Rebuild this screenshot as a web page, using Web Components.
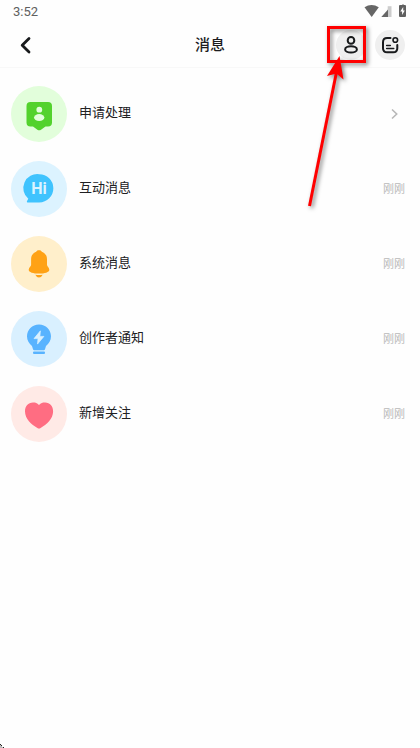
<!DOCTYPE html>
<html lang="zh-CN">
<head>
<meta charset="utf-8">
<meta name="viewport" content="width=device-width, initial-scale=1">
<title>消息</title>
<style>
html,body{margin:0;background:#fefefe}
body{font-family:"Noto Sans","Noto Sans CJK SC",sans-serif;color:#1c1c1e}
</style>
</head>
<body>
<message-page></message-page>

<template id="t-page">
<style>
:host{display:block;position:relative;min-height:100vh;overflow:hidden}
ul{list-style:none;margin:0;padding:8px 0 0}
</style>
<status-bar></status-bar>
<page-header>消息</page-header>
<main><ul>
<li><message-row bg="#e2fedb" more>
<svg slot="icon" viewBox="0 0 56 56"><path fill="#53d22d" d="M19.500 16h17.500q4 0 4 4v16.500q0 4-4 4h-2.500l-4.500 3.200q-1.800 1.300-3.600 0L22 40.500h-2.500q-4 0-4-4V20q0-4 4-4z"/><circle cx="28.300" cy="23.700" r="2.900" fill="#e2fedb"/><ellipse cx="28.200" cy="31.600" rx="5.200" ry="3.500" fill="#e2fedb"/></svg>申请处理</message-row></li>
<li><message-row bg="#dcf3ff" time="刚刚">
<svg slot="icon" viewBox="0 0 56 56"><path fill="#3fc3fe" d="M28.200 13.200a14 14 0 0 1 0 28.300H17.300q-2.300 0-1-2.100l1-1.600A14 14 0 0 1 28.200 13.200z"/><text x="28" y="33" text-anchor="middle" font-family="Roboto, sans-serif" font-size="16" font-weight="700" fill="#dcf3ff">Hi</text></svg>互动消息</message-row></li>
<li><message-row bg="#ffefcb" time="刚刚">
<svg slot="icon" viewBox="0 0 56 56"><path fill="#ffa216" d="M28 14.300c1.300 0 2.200.5 2.800 1.400 3.300 1.200 5.200 4 5.200 7.500v5.500c0 1.500 2.300 3 2.300 5 0 2.500-4.600 3.900-10.300 3.900s-10.300-1.400-10.300-3.900c0-2 2.400-3.500 2.400-5v-5.500c0-3.500 1.800-6.300 5.100-7.500.6-.9 1.500-1.400 2.800-1.400z"/><path fill="#ffa216" d="M24.300 38.800q3.700.6 7.400 0-1.300 2.800-3.700 2.800t-3.700-2.800z"/></svg>系统消息</message-row></li>
<li><message-row bg="#d9f0ff" time="刚刚">
<svg slot="icon" viewBox="0 0 56 56"><path fill="#58b3ff" d="M28 13.500c6.900 0 12 5.200 12 11.800 0 4.100-2.100 7.300-5 9.700l-1 3.200q-.3 1-1.200 1h-9.600q-.9 0-1.200-1l-1-3.200c-2.900-2.400-5-5.600-5-9.700 0-6.600 5.100-11.800 12-11.800z"/><rect x="22" y="40.500" width="12" height="2.400" rx="1" fill="#58b3ff"/><path fill="#d9f0ff" stroke="#d9f0ff" stroke-width=".7" stroke-linejoin="round" d="M29.400 19.800 23 27.600h4l-.5 5.500 6.400-7.700h-4z"/></svg>创作者通知</message-row></li>
<li><message-row bg="#ffeae6" time="刚刚">
<svg slot="icon" viewBox="0 0 56 56"><path fill="#ff6d82" d="M28 19c2-2.200 4.200-2.600 6.100-2.500 4.800.2 8 3.800 8 8.700 0 8-6.500 13-12.500 16.700q-1.600 1-3.200 0C20.400 38.200 14 33.200 14 25.200c0-4.900 3.200-8.500 8-8.700 1.900-.1 4 .3 6 2.500z"/></svg>新增关注</message-row></li>
</ul></main>
<pointer-mark></pointer-mark>
<corner-mark></corner-mark>
</template>

<template id="t-status">
<style>
:host{display:flex;height:22px;align-items:center;justify-content:space-between;padding:0 13px;font:13px Roboto,sans-serif;color:#606060;box-sizing:border-box}
svg{display:block;width:44px;height:22px}
</style>
<time>3:52</time>
<svg viewBox="0 0 44 22" aria-hidden="true"><path fill="#666" d="M1.500 7.300Q8.500 2.700 15.800 7.300L8.700 17z"/><path fill="#ccc" d="M24.700 6.200h3.800V17h-3.800z"/><path fill="#666" d="M18.300 17 25 9.500V17z"/><path fill="#606060" d="M37 5h2.200q0-.8.800-.8t.8.800h1.200q1 0 1 1v10q0 1-1 1h-5q-1 0-1-1V6q0-1 1-1z"/><path fill="#fff" d="M40.200 7 37.300 11.500h1.800V15l2.700-4.600h-1.600z"/></svg>
</template>

<template id="t-header">
<style>
:host{display:grid;grid-template-columns:1fr auto 1fr;align-items:center;height:46px;padding:0 15px 0 11px;border-bottom:1px solid #f8f8f8;box-sizing:border-box}
h1{margin:0;padding:0 0 2px 4px;font-size:15px;line-height:22px;font-weight:500;color:#1c1c1e}
button{appearance:none;border:0;padding:0;margin:0;width:30px;height:30px;border-radius:50%;background:none;color:#181a1c}
svg{display:block;width:30px;height:30px;fill:none;stroke:currentColor;stroke-width:2;stroke-linecap:round;stroke-linejoin:round}
.actions{display:flex;gap:9px;justify-content:flex-end}
.actions button{background:#efefef}
</style>
<button aria-label="返回"><svg viewBox="0 0 30 30"><path stroke-width="2.800" d="M18 8.500 11.200 15.200 18 21.900"/></svg></button>
<h1><slot></slot></h1>
<div class="actions">
<button aria-label="联系人"><svg viewBox="0 0 30 30"><circle cx="15" cy="10.400" r="3.300"/><ellipse cx="15" cy="19.400" rx="5.900" ry="3.100"/></svg></button>
<button aria-label="设置"><svg viewBox="0 0 30 30"><path d="M15.500 8H12.200Q8 8 8 12.200v6Q8 22.300 12.200 22.300h6Q22.300 22.300 22.300 18.200V15"/><circle cx="20.300" cy="10" r="2.300" stroke-width="1.600"/><path stroke-width="1.600" d="M11.700 15.500h3.600M11.700 18.500h7"/></svg></button>
</div>
</template>

<template id="t-row">
<style>
:host{display:flex;align-items:center;height:75px;padding:0 15px 0 11px;gap:12px;box-sizing:border-box}
.icon{flex:none;width:56px;height:56px;border-radius:50%;overflow:hidden}
::slotted(svg){display:block;width:56px;height:56px}
.label{flex:1;font-size:13px;line-height:20px;padding-bottom:3px;color:#202022}
time{font-size:11px;line-height:16px;color:#b9b9b9}
.more{width:16px;height:16px;fill:none;stroke:#b8b8b8;stroke-width:1.600}
:host([more]) time,:host(:not([more])) .more{display:none}
</style>
<div class="icon"><slot name="icon"></slot></div>
<span class="label"><slot></slot></span>
<time></time>
<svg class="more" viewBox="0 0 16 16" aria-hidden="true"><path d="M3 3.500 7.700 8 3 12.500"/></svg>
</template>

<template id="t-pointer">
<style>
:host{position:absolute;top:20px;right:40px;width:80px;height:200px;pointer-events:none}
svg{display:block;width:80px;height:200px;overflow:visible;filter:drop-shadow(2px 2px 2px rgba(0,0,0,.5))}
</style>
<svg viewBox="300 20 80 200" aria-hidden="true"><rect x="328.500" y="27.500" width="36" height="34" fill="none" stroke="#f00" stroke-width="3"/><path d="M309.500 206 336.500 72" stroke="#f00" stroke-width="3"/><path fill="#f00" d="M339.500 56 343.500 79.500 336.500 73.500 327 76z"/></svg>
</template>

<template id="t-corner">
<style>
:host{position:absolute;left:0;bottom:0}
svg{display:block;width:4px;height:4px}
</style>
<svg viewBox="0 0 4 4" aria-hidden="true"><path fill="#222" d="M0 0h1v1H0zM1 1h1v1H1zM3 3h1v1H3z"/><path fill="#bbb" d="M0 1h1v1h1v1h1v1H0z"/></svg>
</template>

<script>
const define = (name, id, setup) => customElements.define(name, class extends HTMLElement {
  constructor() {
    super();
    this.attachShadow({mode: 'open'}).append(document.getElementById(id).content.cloneNode(true));
  }
  connectedCallback() { if (setup) setup(this, this.shadowRoot); }
});
define('status-bar', 't-status');
define('page-header', 't-header');
define('message-row', 't-row', (el, root) => {
  root.querySelector('.icon').style.background = el.getAttribute('bg');
  root.querySelector('time').textContent = el.getAttribute('time') || '';
});
define('pointer-mark', 't-pointer');
define('corner-mark', 't-corner');
define('message-page', 't-page');
</script>
</body>
</html>
